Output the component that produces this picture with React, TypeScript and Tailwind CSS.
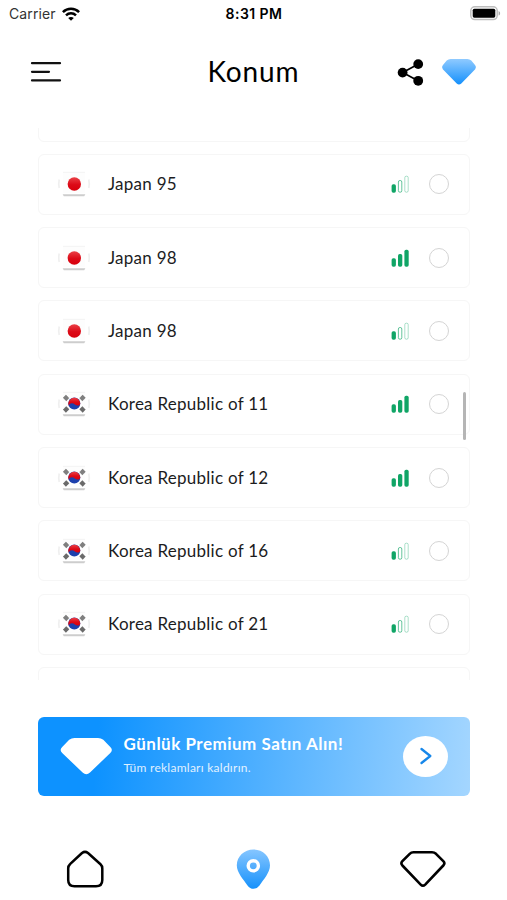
interface Server {
  country: "jp" | "kr";
  name: string;
  signal: number;
}

const servers: Server[] = [
  { country: "jp", name: "Japan 95", signal: 1 },
  { country: "jp", name: "Japan 98", signal: 3 },
  { country: "jp", name: "Japan 98", signal: 1 },
  { country: "kr", name: "Korea Republic of 11", signal: 3 },
  { country: "kr", name: "Korea Republic of 12", signal: 3 },
  { country: "kr", name: "Korea Republic of 16", signal: 1 },
  { country: "kr", name: "Korea Republic of 21", signal: 1 },
];

const WifiIcon = () => (
  <svg width="18" height="14" viewBox="0 0 18 14" fill="none" stroke="#000" strokeWidth="2.5">
    <path d="M0.9 5.1C5.4 0.6 12.6 0.6 17.1 5.1" />
    <path d="M4 8.3C6.8 5.6 11.2 5.6 14 8.3" />
    <path d="M9 13.8L6.2 11C7.8 9.5 10.2 9.5 11.8 11Z" fill="#000" stroke="none" />
  </svg>
);

const BatteryIcon = () => (
  <svg width="31" height="15" viewBox="0 0 31 15">
    <rect x="0.8" y="0.8" width="26.4" height="12.8" rx="4" fill="#fff" stroke="#bdbdbd" strokeWidth="1.5" />
    <rect x="2.7" y="2.7" width="22.6" height="9" rx="1.6" fill="#000" />
    <path d="M28.6 5v4.6c2-.8 2-3.8 0-4.6Z" fill="#aaa" />
  </svg>
);

const MenuIcon = () => (
  <svg width="32" height="22" viewBox="0 0 32 22" stroke="#111" strokeWidth="2.2" strokeLinecap="round">
    <path d="M2 2.2H30M2 10.8H19M2 19.4H30" />
  </svg>
);

const ShareIcon = () => (
  <svg width="27" height="27" viewBox="0 0 27 27" fill="#000">
    <path d="M21 5.2L5.7 13.6L21 21.8" fill="none" stroke="#000" strokeWidth="1.7" />
    <circle cx="21.2" cy="5.1" r="4.9" />
    <circle cx="5.6" cy="13.6" r="4.9" />
    <circle cx="21.2" cy="21.8" r="4.9" />
  </svg>
);

const GemIcon = () => (
  <svg width="36" height="28" viewBox="0 0 36 28">
    <defs>
      <linearGradient id="gem" x1="0" y1="0" x2="0" y2="1">
        <stop offset="0" stopColor="#8fcaff" />
        <stop offset="1" stopColor="#1490fc" />
      </linearGradient>
    </defs>
    <path
      d="M9.6 1H26.4Q28.6 1 30.3 2.6L34.2 7.2Q36 9.3 34.2 11.3L20.3 25.5Q18 27.7 15.7 25.5L1.8 11.3Q0 9.3 1.8 7.2L5.7 2.6Q7.4 1 9.6 1Z"
      fill="url(#gem)"
    />
  </svg>
);

// Round flag: faint white disc cut at the top and bottom edges
const Flag = ({ country }: { country: Server["country"] }) => (
  <svg width="34" height="28" viewBox="0 0 34 28">
    <rect x="6" y="2.3" width="22" height="20.5" fill="#fdfdfd" />
    <path d="M6 2.3H28" stroke="#f3f3f3" />
    <path d="M2.2 9.5Q1.4 13.5 2.2 18M31.8 9.5Q32.6 13.5 31.8 18" fill="none" stroke="#efefef" strokeWidth="1.6" />
    <path d="M5.6 24.2H28.4L27.2 26.2H6.8Z" fill="#cdcdcd" />
    {country === "jp" ? (
      <circle cx="17.3" cy="14" r="6.7" fill="url(#red)" />
    ) : (
      <g transform="translate(.3 .4)">
        <circle cx="17" cy="13.2" r="6" fill="#1c40ad" />
        <path
          d="M11.1 12.2A6 6 0 0 1 23 13.4C22.6 15.4 19.6 15.8 17.6 14C15.4 12.2 12.4 12.4 11.4 15.3A6 6 0 0 1 11.1 12.2Z"
          fill="url(#red)"
        />
        <g stroke="#6a6a6a" strokeWidth="1.6">
          <path d="M6.2 8L9.2 4.9M7.3 9.1L10.3 6M8.4 10.2L11.4 7.1" opacity=".85" />
          <path d="M27.8 8L24.8 4.9M26.7 9.1L23.7 6M25.6 10.2L22.6 7.1" opacity=".85" />
          <path d="M6.2 18.6L9.2 21.7M7.3 17.5L10.3 20.6M8.4 16.4L11.4 19.5" />
          <path d="M27.8 18.6L24.8 21.7M26.7 17.5L23.7 20.6M25.6 16.4L22.6 19.5" />
        </g>
      </g>
    )}
    <defs>
      <linearGradient id="red" x1="0" y1="0" x2="0" y2="1">
        <stop offset="0" stopColor="#ea4046" />
        <stop offset=".55" stopColor="#dc0a17" />
        <stop offset="1" stopColor="#d8000c" />
      </linearGradient>
    </defs>
  </svg>
);

const SignalBars = ({ level }: { level: number }) => (
  <svg width="18" height="18" viewBox="0 0 18 18">
    <rect x="0.6" y="9.2" width="4.3" height="8.5" rx="1.7" fill="#10a566" />
    {level === 3 ? (
      <g fill="#10a566">
        <rect x="7" y="5" width="4.3" height="12.7" rx="1.7" />
        <rect x="13.4" y="0.7" width="4.3" height="17" rx="1.7" />
      </g>
    ) : (
      <g fill="none" stroke="#10a566">
        <rect x="7.4" y="5.5" width="3.4" height="11.7" rx="1.5" opacity=".65" />
        <rect x="13.8" y="1.2" width="3.4" height="16" rx="1.5" opacity=".35" />
      </g>
    )}
  </svg>
);

const ServerRow = ({ server }: { server: Server }) => (
  <div className="flex h-[61px] shrink-0 items-center rounded-md border border-[#f6f6f6] pl-[18.5px] pr-[20.5px]">
    <Flag country={server.country} />
    <span className="ml-[17px] flex-1 whitespace-nowrap text-[17px] leading-6 tracking-[0.26px] text-[#1c1c1e]">
      {server.name}
    </span>
    <SignalBars level={server.signal} />
    <span className="ml-5 size-5 rounded-full border-[1.5px] border-[#d4d4d4]" />
  </div>
);

export default function App() {
  return (
    <div className="flex h-[900px] w-[507px] flex-col overflow-hidden bg-white font-['Lato',sans-serif] text-black">
      {/* Status bar */}
      <div className="grid h-7 grid-cols-3 items-center pb-px pl-[9px] pr-[6px] font-['Inter',sans-serif] text-[14px]">
        <div className="flex items-center gap-[6px] text-[#333]">
          <span className="tracking-[0.1px]">Carrier</span>
          <WifiIcon />
        </div>
        <span className="pr-0.5 text-center font-semibold tracking-[0.45px]">8:31 PM</span>
        <div className="-mt-px flex justify-end">
          <BatteryIcon />
        </div>
      </div>

      {/* Header */}
      <header className="flex h-[100px] items-start justify-between pl-[30px] pr-[30px] pt-[22px]">
        <div className="flex h-11 w-[80px] items-center">
          <MenuIcon />
        </div>
        <h1 className="-mt-px text-[28px] leading-[44px] tracking-[0.9px]">Konum</h1>
        <div className="flex h-11 items-center gap-[17px]">
          <ShareIcon />
          <GemIcon />
        </div>
      </header>

      {/* Server list */}
      <main className="relative h-[552px] overflow-hidden pl-[37.5px] pr-[37px]">
        <div className="-mt-[47.5px] flex flex-col gap-[12.33px]">
          <div className="h-[61px] shrink-0 rounded-md border border-[#f6f6f6]" />
          {servers.map((server, index) => (
            <ServerRow key={index} server={server} />
          ))}
          <div className="h-[61px] shrink-0 rounded-md border border-[#f6f6f6]" />
        </div>
        <div className="absolute right-[41px] top-[264px] h-12 w-[3px] rounded-full bg-[#b5b5b5]" />
      </main>

      {/* Premium banner */}
      <div className="ml-[37.5px] mt-[36.5px] flex h-[79.5px] w-[432.5px] items-center rounded-md bg-linear-[95deg] from-[#0d92ff] from-14% to-[#a4d6ff] pl-[22px] pr-[22px] text-white">
        <svg width="53" height="39" viewBox="0 0 53 39" fill="#fff">
          <path d="M14.5 1H38Q41 1 43.3 2.8L50.3 10Q53.4 13 50.3 16L30 35.5Q26.3 39 22.6 35.5L2.2 16Q-.9 13 2.2 10L9.2 2.8Q11.5 1 14.5 1Z" />
        </svg>
        <div className="ml-[11px] flex-1 whitespace-nowrap">
          <p className="text-[17px] font-bold leading-6 tracking-[0.5px]">Günlük Premium Satın Alın!</p>
          <p className="text-[12px] leading-6 tracking-[0.26px] opacity-85">Tüm reklamları kaldırın.</p>
        </div>
        <div className="flex h-[41px] w-[45px] items-center justify-center rounded-[50%] bg-white">
          <svg
            width="12"
            height="18"
            viewBox="0 0 12 18"
            fill="none"
            stroke="#1687ea"
            strokeWidth="2.3"
            strokeLinecap="round"
            strokeLinejoin="round"
          >
            <path d="M1.5 2L10.3 9L1.5 16" />
          </svg>
        </div>
      </div>

      {/* Tab bar */}
      <nav className="mt-[53px] flex items-start pl-[66px]">
        <svg className="mt-px" width="38" height="38" viewBox="0 0 38 38" fill="none" stroke="#000" strokeWidth="2.5" strokeLinejoin="round">
          <path d="M16 3Q19 .8 22 3L34.5 14.2Q36.3 15.8 36.3 18.5V30Q36.3 36.3 30 36.3H8.5Q2.2 36.3 2.2 30V18.5Q2.2 15.8 4 14.2Z" />
        </svg>
        <svg className="ml-[132px]" width="35" height="41" viewBox="0 0 35 41">
          <defs>
            <linearGradient id="pin" x1="0" y1="0" x2="0" y2="1">
              <stop offset="0" stopColor="#86c6ff" />
              <stop offset="1" stopColor="#1691fb" />
            </linearGradient>
          </defs>
          <path
            d="M17.5.4C26.8.4 34 7.4 34 16.2C34 23.8 27.5 30.3 23.5 36.4Q21 39.8 17.5 39.8Q14 39.8 11.5 36.4C7.5 30.3.8 23.8.8 16.2C.8 7.4 8.2.4 17.5.4Z"
            fill="url(#pin)"
          />
          <circle cx="17.3" cy="16.8" r="5.1" fill="none" stroke="#fff" strokeWidth="3.4" />
        </svg>
        <svg
          className="ml-[127.5px] mt-px"
          width="48"
          height="38"
          viewBox="0 0 48 38"
          fill="none"
          stroke="#000"
          strokeWidth="2.6"
          strokeLinejoin="round"
        >
          <path d="M14.5 2.3H33Q35.3 2.3 37 3.8L44.3 11.2Q46.4 13.3 44.3 15.5L26.2 34.6Q23.9 36.8 21.7 34.6L3.4 15.5Q1.4 13.3 3.4 11.2L10.7 3.8Q12.2 2.3 14.5 2.3Z" />
        </svg>
      </nav>
    </div>
  );
}
